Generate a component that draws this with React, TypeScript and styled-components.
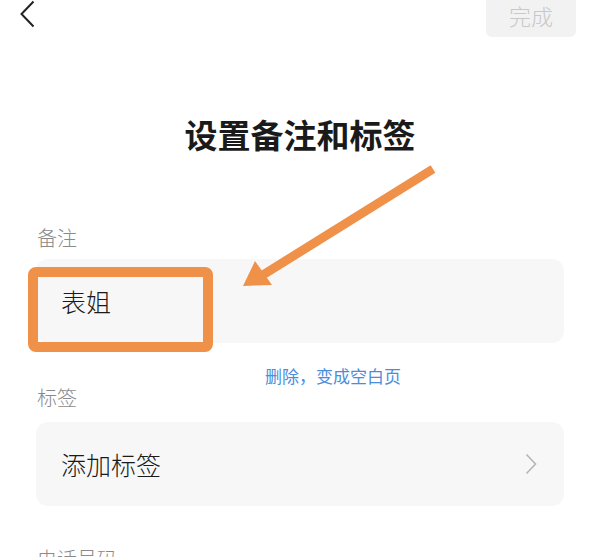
import styled, { createGlobalStyle } from 'styled-components';

const GlobalStyle = createGlobalStyle`
  html, body {
    margin: 0;
    padding: 0;
    background: #ffffff;
  }
  body {
    font-family: "Noto Sans CJK SC", "Noto Sans", sans-serif;
    overflow: hidden;
  }
`;

const Page = styled.div`
  position: relative;
  width: 600px;
  height: 557px;
  overflow: hidden;
  background: #fff;
`;

const TopBar = styled.div`
  display: flex;
  justify-content: space-between;
  align-items: flex-start;
  height: 37px;
  padding: 0 24px 0 19px;
`;

const BackButton = styled.button`
  display: flex;
  padding: 0;
  border: none;
  background: none;
  color: #222;
`;

const DoneButton = styled.button`
  width: 90px;
  height: 44px;
  margin-top: -7px;
  border: none;
  border-radius: 6px;
  background: #f2f2f2;
  color: #c8c8c8;
  font-family: inherit;
  font-size: 22px;
  font-weight: 300;
  line-height: 1;
  padding: 0;
`;

const Content = styled.div`
  display: flex;
  flex-direction: column;
  padding: 0 36px;
`;

const Title = styled.h1`
  margin: 77px 0 0;
  text-align: center;
  font-size: 33px;
  line-height: 40px;
  font-weight: 700;
  color: #1a1a1a;
`;

const SectionLabel = styled.div<{ $top: number }>`
  margin-top: ${({ $top }) => $top}px;
  padding-left: 1px;
  font-size: 20px;
  line-height: 28px;
  font-weight: 300;
  color: #8a8a8a;
`;

const Field = styled.div<{ $top: number }>`
  display: flex;
  align-items: center;
  justify-content: space-between;
  height: 84px;
  margin-top: ${({ $top }) => $top}px;
  padding: 0 27px 0 25px;
  border-radius: 12px;
  background: #f7f7f7;
  font-size: 25px;
  font-weight: 300;
  color: #1a1a1a;
`;

const Chevron = styled.span`
  display: flex;
  color: #b5b5b5;
`;

const ClearLink = styled.div`
  margin-top: 23px;
  padding-left: 229px;
  font-size: 17px;
  line-height: 20px;
  color: #4b8ddc;
`;

const Annotation = styled.svg`
  position: absolute;
  top: 0;
  left: 0;
  pointer-events: none;
`;

const ORANGE = '#f0914a';

export default function App() {
  return (
    <Page>
      <GlobalStyle />
      <TopBar>
        <BackButton aria-label="返回">
          <svg width="16" height="28" viewBox="0 0 16 28">
            <polyline points="14.5,1.5 2.5,14 14.5,26.5" fill="none" stroke="currentColor" strokeWidth="2" />
          </svg>
        </BackButton>
        <DoneButton>完成</DoneButton>
      </TopBar>
      <Content>
        <Title>设置备注和标签</Title>
        <SectionLabel $top={70}>备注</SectionLabel>
        <Field $top={7}>表姐</Field>
        <ClearLink>删除，变成空白页</ClearLink>
        <SectionLabel $top={-2}>标签</SectionLabel>
        <Field $top={10}>
          添加标签
          <Chevron>
            <svg width="12" height="22" viewBox="0 0 12 22">
              <polyline points="1.5,1.5 10.5,11 1.5,20.5" fill="none" stroke="currentColor" strokeWidth="1.6" />
            </svg>
          </Chevron>
        </Field>
        <SectionLabel $top={39}>电话号码</SectionLabel>
      </Content>
      <Annotation width="600" height="557" viewBox="0 0 600 557">
        <rect x="33" y="272" width="175" height="75" rx="3" fill="none" stroke={ORANGE} strokeWidth="10" />
        <line x1="433" y1="169" x2="258" y2="278" stroke={ORANGE} strokeWidth="9" />
        <polygon points="243,286 255,261 272,285" fill={ORANGE} />
      </Annotation>
    </Page>
  );
}
